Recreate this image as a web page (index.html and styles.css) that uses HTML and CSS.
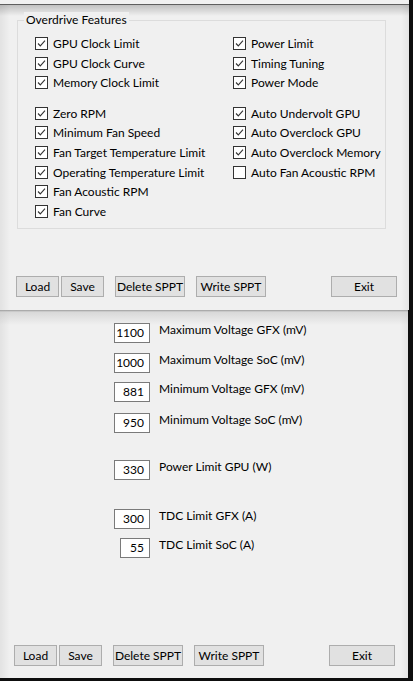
FILE: index.html
```html
<!DOCTYPE html>
<html>
<head>
<meta charset="utf-8">
<link rel="stylesheet" href="styles.css">
</head>
<body>
<div class="screen">
  <div class="prev"></div>
  <section class="win win-top">
    <div class="group">
      <div class="group-title">Overdrive Features</div>
      <div class="checks">
        <label class="chk"><span class="box"><svg viewBox="0 0 11 11"><path d="M2 5.5 L4.3 7.9 L9 2.6"/></svg></span>GPU Clock Limit</label>
        <label class="chk"><span class="box"><svg viewBox="0 0 11 11"><path d="M2 5.5 L4.3 7.9 L9 2.6"/></svg></span>Power Limit</label>
        <label class="chk"><span class="box"><svg viewBox="0 0 11 11"><path d="M2 5.5 L4.3 7.9 L9 2.6"/></svg></span>GPU Clock Curve</label>
        <label class="chk"><span class="box"><svg viewBox="0 0 11 11"><path d="M2 5.5 L4.3 7.9 L9 2.6"/></svg></span>Timing Tuning</label>
        <label class="chk"><span class="box"><svg viewBox="0 0 11 11"><path d="M2 5.5 L4.3 7.9 L9 2.6"/></svg></span>Memory Clock Limit</label>
        <label class="chk"><span class="box"><svg viewBox="0 0 11 11"><path d="M2 5.5 L4.3 7.9 L9 2.6"/></svg></span>Power Mode</label>
      </div>
      <div class="checks second">
        <label class="chk"><span class="box"><svg viewBox="0 0 11 11"><path d="M2 5.5 L4.3 7.9 L9 2.6"/></svg></span>Zero RPM</label>
        <label class="chk"><span class="box"><svg viewBox="0 0 11 11"><path d="M2 5.5 L4.3 7.9 L9 2.6"/></svg></span>Auto Undervolt GPU</label>
        <label class="chk"><span class="box"><svg viewBox="0 0 11 11"><path d="M2 5.5 L4.3 7.9 L9 2.6"/></svg></span>Minimum Fan Speed</label>
        <label class="chk"><span class="box"><svg viewBox="0 0 11 11"><path d="M2 5.5 L4.3 7.9 L9 2.6"/></svg></span>Auto Overclock GPU</label>
        <label class="chk"><span class="box"><svg viewBox="0 0 11 11"><path d="M2 5.5 L4.3 7.9 L9 2.6"/></svg></span>Fan Target Temperature Limit</label>
        <label class="chk"><span class="box"><svg viewBox="0 0 11 11"><path d="M2 5.5 L4.3 7.9 L9 2.6"/></svg></span>Auto Overclock Memory</label>
        <label class="chk"><span class="box"><svg viewBox="0 0 11 11"><path d="M2 5.5 L4.3 7.9 L9 2.6"/></svg></span>Operating Temperature Limit</label>
        <label class="chk"><span class="box"></span>Auto Fan Acoustic RPM</label>
        <label class="chk"><span class="box"><svg viewBox="0 0 11 11"><path d="M2 5.5 L4.3 7.9 L9 2.6"/></svg></span>Fan Acoustic RPM</label>
        <span class="empty"></span>
        <label class="chk"><span class="box"><svg viewBox="0 0 11 11"><path d="M2 5.5 L4.3 7.9 L9 2.6"/></svg></span>Fan Curve</label>
        <span class="empty"></span>
      </div>
    </div>
    <div class="btns">
      <button class="btn b-load">Load</button>
      <button class="btn b-save">Save</button>
      <button class="btn b-del">Delete SPPT</button>
      <button class="btn b-write">Write SPPT</button>
      <button class="btn b-exit">Exit</button>
    </div>
  </section>
  <section class="win win-bottom">
    <div class="field f1"><span class="val">1100</span><span class="lbl">Maximum Voltage GFX (mV)</span></div>
    <div class="field f2"><span class="val">1000</span><span class="lbl">Maximum Voltage SoC (mV)</span></div>
    <div class="field f3"><span class="val">881</span><span class="lbl">Minimum Voltage GFX (mV)</span></div>
    <div class="field f4"><span class="val">950</span><span class="lbl">Minimum Voltage SoC (mV)</span></div>
    <div class="field f5"><span class="val">330</span><span class="lbl">Power Limit GPU (W)</span></div>
    <div class="field f6"><span class="val">300</span><span class="lbl">TDC Limit GFX (A)</span></div>
    <div class="field f7"><span class="val narrow">55</span><span class="lbl">TDC Limit SoC (A)</span></div>
    <div class="btns btns-bottom">
      <button class="btn b-load">Load</button>
      <button class="btn b-save">Save</button>
      <button class="btn b-del">Delete SPPT</button>
      <button class="btn b-write">Write SPPT</button>
      <button class="btn b-exit">Exit</button>
    </div>
  </section>
</div>
</body>
</html>
```

FILE: styles.css
```css
* { box-sizing: border-box; }
html, body {
  margin: 0;
  padding: 0;
  width: 413px;
  height: 681px;
  overflow: hidden;
  background: #0e0e0e;
}
body {
  font-family: Lato, "Liberation Sans", sans-serif;
  font-size: 12px;
  color: #000;
}
.screen {
  width: 409px;
  display: flex;
  flex-direction: column;
}
.prev {
  height: 5px;
  background: #f0f0f0;
  border-bottom: 1px solid #5e5e5e;
}
.win {
  background:
    linear-gradient(to right, rgba(0,0,0,0.06), rgba(0,0,0,0) 10px),
    linear-gradient(to left, rgba(0,0,0,0.05), rgba(0,0,0,0) 8px),
    #f0f0f0;
}
.win-top {
  height: 305px;
  display: flex;
  flex-direction: column;
  background:
    linear-gradient(to bottom, rgba(0,0,0,0.2), rgba(0,0,0,0) 11px),
    linear-gradient(to right, rgba(0,0,0,0.06), rgba(0,0,0,0) 10px),
    linear-gradient(to left, rgba(0,0,0,0.05), rgba(0,0,0,0) 8px),
    #f0f0f0;
}
.group {
  margin: 15px 0 0 17px;
  width: 369px;
  height: 209px;
  border: 1px solid #dcdcdc;
}
.group-title {
  width: fit-content;
  line-height: 16px;
  margin: -9px 0 0 6px;
  padding: 0 2px;
  background: #f0f0f0;
}
.checks {
  display: grid;
  grid-template-columns: 198px 1fr;
  grid-auto-rows: 19.6px;
  padding-left: 17px;
  margin-top: 6px;
}
.checks.second { margin-top: 10.7px; }
.chk {
  display: flex;
  align-items: center;
  white-space: nowrap;
}
.box {
  width: 13px;
  height: 13px;
  border: 1px solid #333;
  background: #fff;
  margin-right: 5px;
  flex: none;
  display: flex;
}
.box svg {
  width: 11px;
  height: 11px;
}
.box path {
  fill: none;
  stroke: #333;
  stroke-width: 1.1;
}
.btns {
  display: flex;
  margin-top: 47px;
  padding-left: 16px;
}
.btn {
  height: 21px;
  padding: 0;
  border: 1px solid #adadad;
  background: #e1e1e1;
  font-family: inherit;
  font-size: 12px;
  color: #000;
  line-height: 19px;
  text-align: center;
}
.b-load { width: 43px; }
.b-save { width: 43px; margin-left: 2px; }
.b-del { width: 70px; margin-left: 11px; }
.b-write { width: 70px; margin-left: 11px; }
.b-exit { width: 66px; margin-left: 65px; }

.win-bottom {
  width: 408px;
  height: 368px;
  display: flex;
  flex-direction: column;
  background:
    linear-gradient(to bottom, #9c9c9c 0, rgba(200,200,200,0.6) 2px, rgba(240,240,240,0) 15px),
    linear-gradient(to right, rgba(0,0,0,0.06), rgba(0,0,0,0) 10px),
    linear-gradient(to left, rgba(0,0,0,0.05), rgba(0,0,0,0) 8px),
    #f0f0f0;
}
.field {
  display: flex;
  align-items: flex-start;
  padding-left: 114px;
}
.val {
  width: 36px;
  height: 20px;
  border: 1px solid #7a7a7a;
  background: #fff;
  text-align: right;
  padding-right: 5px;
  line-height: 18px;
  flex: none;
}
.val.narrow {
  width: 30px;
  margin-left: 6px;
}
.lbl {
  margin-left: 9px;
  line-height: 14px;
  white-space: nowrap;
}
.f1 { margin-top: 13px; }
.f2 { margin-top: 10px; }
.f3 { margin-top: 9px; }
.f4 { margin-top: 11px; }
.f5 { margin-top: 27px; }
.f6 { margin-top: 29px; }
.f7 { margin-top: 9px; }
.btns-bottom {
  margin-top: 87px;
  padding-left: 14px;
}
```
